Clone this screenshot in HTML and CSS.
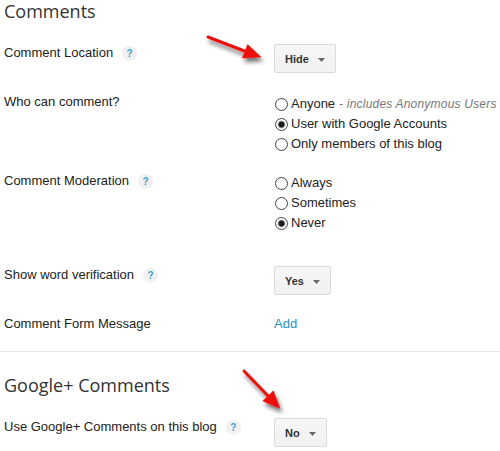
FILE: index.html
```html
<!DOCTYPE html>
<html>
<head>
<meta charset="utf-8">
<link rel="stylesheet" href="styles.css">
</head>
<body>
<div class="page">
  <section class="section">
    <h2 class="heading">Comments</h2>
    <div class="row row-first">
      <div class="label label-btn">Comment Location<span class="help">?</span></div>
      <div class="control"><button class="select">Hide<svg class="caret" viewBox="0 0 7 4"><path d="M0 0h7L3.5 4z"/></svg></button></div>
    </div>
    <div class="row">
      <div class="label">Who can comment?</div>
      <div class="control options">
        <label class="option"><input type="radio" name="who" class="radio">Anyone <span class="note">- includes Anonymous Users</span></label>
        <label class="option"><input type="radio" name="who" class="radio" checked>User with Google Accounts</label>
        <label class="option"><input type="radio" name="who" class="radio">Only members of this blog</label>
      </div>
    </div>
    <div class="row row-tight">
      <div class="label">Comment Moderation<span class="help">?</span></div>
      <div class="control options">
        <label class="option"><input type="radio" name="mod" class="radio">Always</label>
        <label class="option"><input type="radio" name="mod" class="radio">Sometimes</label>
        <label class="option"><input type="radio" name="mod" class="radio" checked>Never</label>
      </div>
    </div>
    <div class="row row-loose">
      <div class="label label-btn">Show word verification<span class="help">?</span></div>
      <div class="control"><button class="select">Yes<svg class="caret" viewBox="0 0 7 4"><path d="M0 0h7L3.5 4z"/></svg></button></div>
    </div>
    <div class="row">
      <div class="label">Comment Form Message</div>
      <div class="control"><a class="link" href="#">Add</a></div>
    </div>
  </section>
  <hr class="divider">
  <section class="section">
    <h2 class="heading heading-second">Google+ Comments</h2>
    <div class="row row-first">
      <div class="label label-btn">Use Google+ Comments on this blog<span class="help">?</span></div>
      <div class="control"><button class="select">No<svg class="caret" viewBox="0 0 7 4"><path d="M0 0h7L3.5 4z"/></svg></button></div>
    </div>
  </section>
  <svg class="arrows" width="500" height="451" viewBox="0 0 500 451">
    <defs>
      <filter id="shadow" x="-50%" y="-50%" width="200%" height="200%">
        <feDropShadow dx="2" dy="4" stdDeviation="2" flood-color="#000" flood-opacity="0.55"/>
      </filter>
    </defs>
    <g filter="url(#shadow)" fill="#ee1111" stroke="#ee1111">
      <line x1="208" y1="37" x2="247" y2="52" stroke-width="3" stroke-linecap="round"/>
      <polygon points="261,57 247.6,44.5 242.4,58" stroke-width="0.5"/>
      <line x1="244" y1="371" x2="270" y2="398" stroke-width="3" stroke-linecap="round"/>
      <polygon points="280,408.5 262.8,401 273.4,390.8" stroke-width="0.5"/>
    </g>
  </svg>
</div>
</body>
</html>
```
FILE: styles.css
```css
html, body {
  margin: 0;
  padding: 0;
  background: #fff;
}

.page {
  position: relative;
  width: 500px;
  height: 451px;
  overflow: hidden;
  font-family: "Liberation Sans", Arial, sans-serif;
  font-size: 13px;
  color: #222;
}

.section {
  padding-left: 4px;
}

.heading {
  margin: 0;
  font-family: "Open Sans", sans-serif;
  font-weight: 400;
  font-size: 18px;
  line-height: 22px;
  color: #333;
}

.heading-second {
  margin-top: 22px;
}

.row {
  display: grid;
  grid-template-columns: 270px 1fr;
  align-items: start;
  margin-top: 21px;
}

.row-first {
  margin-top: 22px;
}

.row-tight {
  margin-top: 19px;
}

.row-loose {
  margin-top: 33px;
}

.label {
  display: flex;
  align-items: center;
  gap: 9px;
  line-height: 16px;
  white-space: nowrap;
}

.label-btn {
  padding-top: 1px;
}

.help {
  display: inline-block;
  width: 15px;
  height: 15px;
  border-radius: 50%;
  background: #f1f1f1;
  color: #3d9fd3;
  font-size: 10px;
  font-weight: bold;
  line-height: 15px;
  text-align: center;
}

.control {
  line-height: 16px;
}

.select {
  display: inline-flex;
  align-items: center;
  box-sizing: border-box;
  height: 29px;
  margin: 0;
  padding: 0 10px 0 10px;
  border: 1px solid #dadada;
  border-radius: 2px;
  background: linear-gradient(#f6f6f6, #f1f1f1);
  font-family: "Liberation Sans", Arial, sans-serif;
  font-size: 11px;
  font-weight: bold;
  color: #333;
  cursor: default;
}

.caret {
  width: 7px;
  height: 4px;
  margin-left: 9px;
  margin-top: 2px;
  fill: #666;
}

.options {
  display: flex;
  flex-direction: column;
}

.option {
  display: flex;
  align-items: center;
  height: 20px;
  white-space: nowrap;
}

.radio {
  appearance: none;
  -webkit-appearance: none;
  box-sizing: border-box;
  width: 13px;
  height: 13px;
  margin: 0 3px 0 1px;
  border: 1px solid #444;
  border-radius: 50%;
  background: #fff;
}

.radio:checked {
  background: radial-gradient(circle, #1a1a1a 0, #1a1a1a 2.5px, #8a8a8a 3.2px, #fff 4.3px);
}

.note {
  margin-left: 4px;
  font-size: 12px;
  font-style: italic;
  color: #777;
  letter-spacing: 0.2px;
}

.link {
  color: #2a92c2;
  text-decoration: none;
}

.divider {
  margin: 19px 0 0;
  border: 0;
  border-top: 1px solid #e5e5e5;
  height: 0;
}

.arrows {
  position: absolute;
  top: 0;
  left: 0;
  pointer-events: none;
}
```
